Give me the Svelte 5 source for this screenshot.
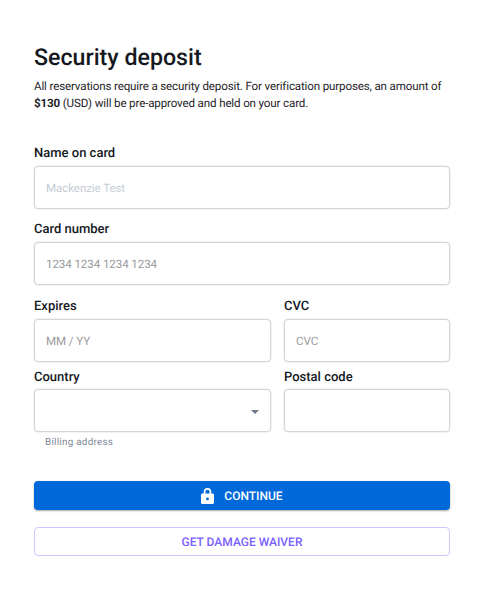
<script>
	const placeholder = 'Mackenzie Test';
</script>

<div class="page">
	<h1>Security deposit</h1>
	<p class="intro">
		All reservations require a security deposit. For verification purposes, an amount of
		<strong>$130</strong> (USD) will be pre-approved and held on your card.
	</p>

	<form class="form" onsubmit={(e) => e.preventDefault()}>
		<div class="field">
			<span class="label">Name on card</span>
			<div class="box"><span class="ph light">{placeholder}</span></div>
		</div>
		<div class="field">
			<span class="label">Card number</span>
			<div class="box"><span class="ph">1234 1234 1234 1234</span></div>
		</div>
		<div class="row">
			<div class="field">
				<span class="label">Expires</span>
				<div class="box"><span class="ph">MM / YY</span></div>
			</div>
			<div class="field">
				<span class="label">CVC</span>
				<div class="box"><span class="ph">CVC</span></div>
			</div>
		</div>
		<div class="row second">
			<div class="field">
				<span class="label">Country</span>
				<div class="box select"><span class="caret"></span></div>
				<span class="hint">Billing address</span>
			</div>
			<div class="field">
				<span class="label">Postal code</span>
				<div class="box"></div>
			</div>
		</div>

		<button class="btn primary" type="submit">
			<svg width="13" height="16" viewBox="0 0 13 16" aria-hidden="true">
				<path
					fill="#fff"
					fill-rule="evenodd"
					d="M2.7 5.500V3.800a3.800 3.800 0 0 1 7.600 0v1.700h1.200c.8 0 1.500.7 1.500 1.500v7.500c0 .8-.7 1.500-1.500 1.500h-10C.7 16 0 15.300 0 14.500V7c0-.8.7-1.500 1.500-1.500zM4.400 5.500h4.200V3.800a2.100 2.100 0 0 0-4.200 0zM6.500 9.500a1.400 1.400 0 1 0 0 2.800 1.400 1.400 0 0 0 0-2.800z"
				/>
			</svg>
			CONTINUE
		</button>
		<button class="btn outline" type="button">GET DAMAGE WAIVER</button>
	</form>
</div>

<style>
	:global(body) {
		margin: 0;
		background: #fff;
	}
	.page {
		box-sizing: border-box;
		width: 486px;
		height: 589px;
		padding: 43px 36px 0 34px;
		font-family: Roboto, 'Liberation Sans', sans-serif;
		color: #15191e;
		overflow: hidden;
		text-rendering: geometricPrecision;
	}
	h1 {
		margin: 0;
		font-size: 23.2px;
		line-height: 28px;
		font-weight: 500;
	}
	.intro {
		margin: 7px 0 0;
		font-size: 11.6px;
		line-height: 17px;
		letter-spacing: -0.15px;
		color: #1f2429;
	}
	.intro strong {
		font-weight: 700;
	}
	.form {
		display: flex;
		flex-direction: column;
		margin-top: 34px;
	}
	.field {
		display: flex;
		flex-direction: column;
		min-width: 0;
	}
	.field + .field {
		margin-top: 13px;
	}
	.row .field + .field {
		margin-top: 0;
	}
	.label {
		font-size: 13px;
		line-height: 16px;
		font-weight: 500;
		margin-bottom: 4px;
	}
	.second .label {
		margin-bottom: 3px;
	}
	.box {
		box-sizing: border-box;
		height: 43px;
		display: flex;
		align-items: center;
		padding: 0 11px;
		border: 1px solid #d6d6d8;
		border-radius: 4px;
		background: #fff;
		box-shadow: 0 0 0 0.5px #e8e8ea;
	}
	.ph {
		font-size: 11.6px;
		letter-spacing: -0.1px;
		color: #9a9a9c;
	}
	.ph.light {
		color: #c6cdd6;
	}
	.row {
		display: grid;
		grid-template-columns: 237px 166px;
		gap: 13px;
		margin-top: 14px;
	}
	.row.second {
		margin-top: 8px;
	}
	.select {
		justify-content: flex-end;
		padding-right: 11px;
	}
	.caret {
		width: 0;
		height: 0;
		margin-top: 3px;
		border-left: 4px solid transparent;
		border-right: 4px solid transparent;
		border-top: 4.5px solid #6f7b8a;
	}
	.hint {
		margin: 4px 0 0 11px;
		font-size: 9.8px;
		line-height: 13px;
		letter-spacing: 0.28px;
		color: #7b8896;
	}
	.btn {
		box-sizing: border-box;
		width: 416px;
		display: flex;
		align-items: center;
		justify-content: center;
		font-family: inherit;
		font-size: 12px;
		font-weight: 500;
		border-radius: 4px;
		padding: 0;
		cursor: pointer;
		text-rendering: geometricPrecision;
	}
	.primary {
		height: 29px;
		margin-top: 32px;
		gap: 10px;
		color: #fff;
		background: #0069d9;
		border: 0;
		box-shadow: 0 1px 2px rgba(0, 0, 0, 0.35);
	}
	.outline {
		height: 29px;
		margin-top: 17px;
		color: #7b61ff;
		background: #fff;
		border: 1px solid #cfc6ff;
	}
</style>
